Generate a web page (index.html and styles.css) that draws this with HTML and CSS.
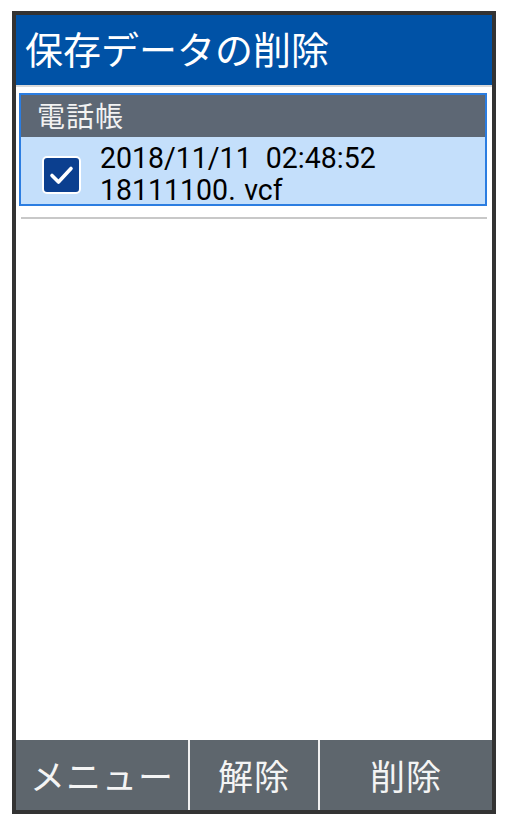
FILE: index.html
```html
<!DOCTYPE html>
<html lang="ja">
<head>
<meta charset="UTF-8">
<meta name="viewport" content="width=device-width, initial-scale=1.0">
<title>保存データの削除</title>
<link rel="stylesheet" href="styles.css">
</head>
<body>
<div class="phone">
    <div class="title-bar">保存データの削除</div>
    <div class="content">
        <div class="list-box">
            <div class="group-header">電話帳</div>
            <div class="item">
                <svg class="check" width="39" height="38" viewBox="0 0 39 38">
                    <rect x="1" y="1" width="37" height="36" rx="4" fill="#0b3f8f" stroke="#fff" stroke-width="2"/>
                    <path d="M10 19.5 L16.5 26 L29 12.5" fill="none" stroke="#fff" stroke-width="3.6" stroke-linecap="round" stroke-linejoin="round"/>
                </svg>
                <div class="item-text">
                    <div>2018/11/11&nbsp; 02:48:52</div>
                    <div>18111100<span class="dot">.</span>vcf</div>
                </div>
            </div>
        </div>
        <div class="separator"></div>
    </div>
    <div class="softkeys">
        <div class="softkey">メニュー</div>
        <div class="softkey">解除</div>
        <div class="softkey">削除</div>
    </div>
</div>
</body>
</html>
```

FILE: styles.css
```css
body {
    margin: 0;
    padding: 0;
    background-color: #fff;
    font-family: "Noto Sans CJK JP", "Noto Sans", sans-serif;
}
.phone {
    margin: 11px 0 0 12px;
    width: 476px;
    height: 795px;
    border: 4px solid #333;
    display: flex;
    flex-direction: column;
}
.title-bar {
    height: 70px;
    background-color: #0052a6;
    color: #fff;
    font-size: 38px;
    line-height: 66px;
    padding-left: 9px;
}
.content {
    flex-grow: 1;
    border-top: 2px solid #d9d9d9;
    padding: 6px 5px 0 3px;
}
.list-box {
    border: 2px solid #2b7de1;
}
.group-header {
    height: 42px;
    background-color: #5d6774;
    color: #f2f2f2;
    font-size: 28px;
    line-height: 40px;
    padding-left: 16px;
    letter-spacing: 1px;
}
.item {
    height: 67px;
    background-color: #c4dffb;
    display: flex;
    align-items: flex-start;
}
.check {
    margin: 19px 0 0 21px;
    flex-shrink: 0;
}
.item-text {
    margin-left: 19px;
    padding-top: 5px;
    font-family: Roboto, "Noto Sans", sans-serif;
    font-size: 30px;
    line-height: 32px;
    color: #000;
    transform: scaleX(0.95);
    transform-origin: left top;
}
.dot {
    padding-right: 9px;
}
.separator {
    margin: 11px 0 0 2px;
    height: 2px;
    background-color: #c8c8c8;
}
.softkeys {
    height: 70px;
    background-color: #5e666d;
    display: grid;
    grid-template-columns: 172px 128px 1fr;
    column-gap: 2px;
}
.softkeys .softkey {
    background-color: #5e666d;
    color: #f4f4f4;
    font-size: 35px;
    text-align: center;
    line-height: 70px;
    letter-spacing: 1px;
}
.softkeys .softkey + .softkey {
    box-shadow: -2px 0 0 #f0f0f0;
}
```
